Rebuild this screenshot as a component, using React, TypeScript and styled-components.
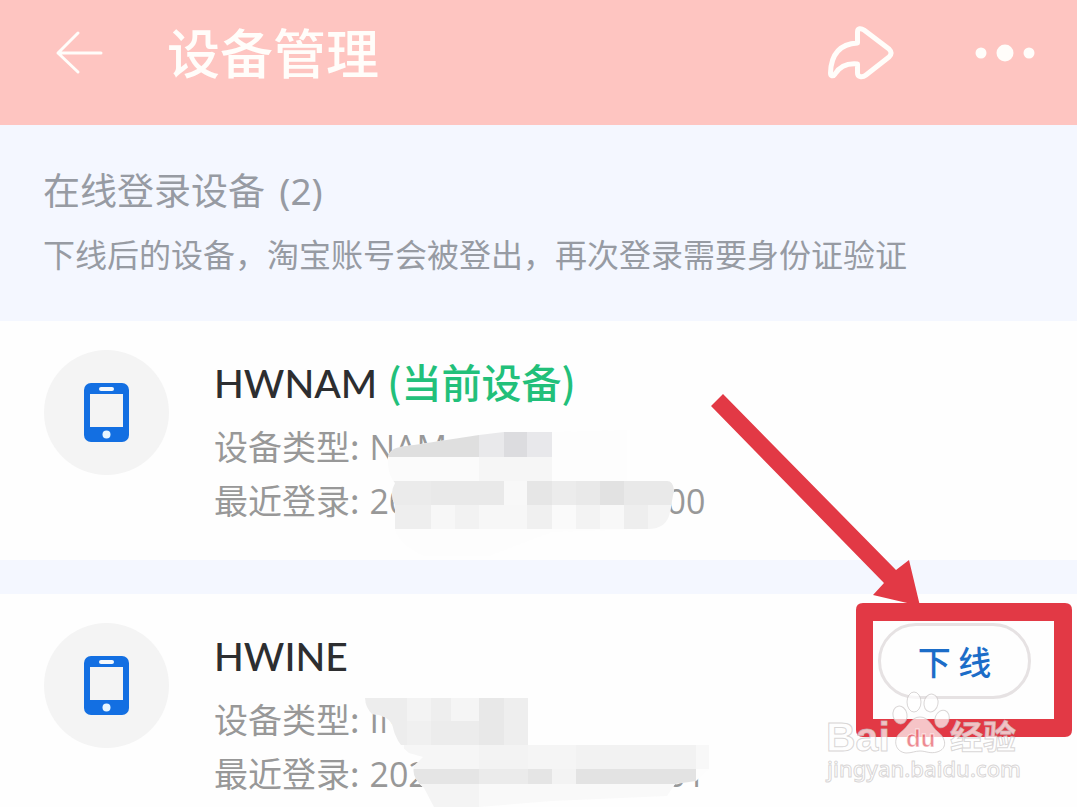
import React from "react";
import styled, { createGlobalStyle } from "styled-components";

const GlobalStyle = createGlobalStyle`
  *, *::before, *::after { box-sizing: border-box; }
  body {
    margin: 0;
    background: #f4f7ff;
    font-family: "Noto Sans CJK SC", "Noto Sans", sans-serif;
  }
  h1, h2, h3, p, ul { margin: 0; padding: 0; }
`;

const Page = styled.div`
  position: relative;
  min-height: 100vh;
  overflow: hidden;
  background: #f4f7ff;
`;

const Header = styled.header`
  display: flex;
  align-items: center;
  height: 125px;
  padding: 0 41px 20px 52px;
  background: #fec5c1;
  color: #fffdfa;
`;

const IconButton = styled.button`
  display: flex;
  align-items: center;
  justify-content: center;
  padding: 0;
  border: 0;
  background: none;
  color: inherit;
`;

const Title = styled.h1`
  flex: 1;
  margin-left: 61px;
  padding-bottom: 4px;
  font-size: 53px;
  line-height: 72px;
  font-weight: 500;
`;

const HeaderActions = styled.div`
  display: flex;
  align-items: center;
  gap: 78px;
`;

const Intro = styled.section`
  height: 196px;
  padding: 36px 43px 0;
  color: #979ba3;
`;

const IntroTitle = styled.h2`
  font-size: 37px;
  line-height: 56px;
  font-weight: 400;
`;

const Count = styled.span`
  margin-left: 6px;
  font-family: "Noto Sans", sans-serif;
`;

const IntroText = styled.p`
  margin-top: 10px;
  font-size: 32px;
  line-height: 48px;
  white-space: nowrap;
`;

const DeviceList = styled.ul`
  display: flex;
  flex-direction: column;
  gap: 34px;
  list-style: none;
`;

const Device = styled.li<{ $last?: boolean }>`
  display: flex;
  align-items: flex-start;
  padding: 29px 46px ${(p) => (p.$last ? 7 : 33)}px 44px;
  background: #fefefe;
`;

const Avatar = styled.div`
  display: flex;
  flex: none;
  align-items: center;
  justify-content: center;
  width: 125px;
  height: 125px;
  border-radius: 50%;
  background: #f4f4f4;
`;

const Info = styled.div`
  position: relative;
  flex: 1;
  margin-left: 45px;
`;

const Name = styled.h3`
  height: 62px;
  margin-bottom: 7px;
  font-size: 40px;
  line-height: 62px;
  font-weight: 500;
  color: #2d2e30;
`;

const Latin = styled.span`
  font-family: Lato, "Noto Sans", sans-serif;
  font-size: 39px;
`;

const Current = styled.span`
  margin-left: 10px;
  color: #22c07a;
`;

const Meta = styled.p`
  display: flex;
  align-items: baseline;
  gap: 10px;
  height: 54px;
  font-size: 34px;
  line-height: 54px;
  color: #989898;
  white-space: nowrap;
`;

const Value = styled.span`
  display: flex;
  justify-content: space-between;
  width: 336px;
  font-family: "Open Sans", sans-serif;
`;

const Mosaic = styled.svg`
  position: absolute;
  top: 75px;
  left: 150px;
`;

const ActionArea = styled.div`
  position: relative;
  flex: none;
`;

const OfflineButton = styled.button`
  width: 153px;
  height: 76px;
  padding: 0;
  border: 3px solid #e6e2e3;
  border-radius: 38px;
  background: #fefefe;
  font-family: inherit;
  font-size: 33px;
  font-weight: 500;
  color: #1c6dc8;
`;

const Pointer = styled.svg`
  position: absolute;
  right: -46px;
  top: -235px;
  pointer-events: none;
`;

const Watermark = styled.svg`
  position: absolute;
  right: 47px;
  bottom: 17px;
  pointer-events: none;
`;

function PhoneIcon() {
  return (
    <svg width="45" height="60" viewBox="0 1 45 60" aria-hidden="true">
      <rect x="0" y="1" width="45" height="59" rx="7" fill="#136fe2" />
      <rect x="15" y="5" width="15" height="4" rx="2" fill="#f4f8fc" />
      <rect x="6" y="12" width="33" height="33" fill="#f4f4f4" />
      <circle cx="22.5" cy="52.5" r="4" fill="#e8f6ff" />
    </svg>
  );
}

type Cell = [number, number, number, number, string];

const firstCells: Cell[] = [
  [388, 432, 92, 25, "#dfdfdf"],
  [480, 432, 25, 25, "#e9e9eb"],
  [505, 432, 23, 25, "#dcdcdf"],
  [528, 432, 25, 25, "#e8e8eb"],
  [388, 457, 92, 24, "#fbfbfb"],
  [480, 457, 73, 24, "#f6f6f6"],
  [388, 481, 44, 24, "#ebebeb"],
  [432, 481, 73, 24, "#e9e9e9"],
  [505, 481, 23, 24, "#f8f8f8"],
  [528, 481, 25, 24, "#e6e6e6"],
  [553, 481, 24, 24, "#ececec"],
  [577, 481, 24, 24, "#e9e9e9"],
  [601, 481, 24, 24, "#e2e2e2"],
  [625, 481, 60, 24, "#e9e9e9"],
  [388, 505, 44, 24, "#eeeeee"],
  [432, 505, 24, 24, "#f7f7f7"],
  [456, 505, 24, 24, "#f2f2f2"],
  [480, 505, 48, 24, "#f7f7f7"],
  [528, 505, 25, 24, "#f0f0f0"],
  [553, 505, 24, 24, "#fafafa"],
  [577, 505, 24, 24, "#f3f3f3"],
  [601, 505, 24, 24, "#f8f8f8"],
  [625, 505, 24, 24, "#eeeeee"],
  [649, 505, 36, 24, "#f4f4f4"],
];

const secondCells: Cell[] = [
  [366, 697, 42, 48, "#ededed"],
  [408, 697, 24, 24, "#f3f3f3"],
  [432, 697, 20, 24, "#eeeeee"],
  [452, 697, 28, 24, "#f5f5f5"],
  [408, 721, 24, 24, "#f0f0f0"],
  [432, 721, 48, 24, "#ececec"],
  [480, 697, 25, 48, "#e8e8e8"],
  [505, 697, 24, 48, "#eeeeee"],
  [405, 745, 75, 24, "#f6f6f6"],
  [480, 745, 49, 24, "#f3f3f3"],
  [529, 745, 48, 24, "#f5f5f5"],
  [577, 745, 120, 24, "#f2f2f2"],
  [697, 745, 20, 24, "#f8f8f8"],
  [405, 769, 75, 15, "#e5e5e5"],
  [480, 769, 49, 15, "#ebebeb"],
  [529, 769, 24, 15, "#e5e5e5"],
  [553, 769, 24, 15, "#f3f3f3"],
  [577, 769, 120, 15, "#e3e3e3"],
  [405, 784, 75, 24, "#f4f4f4"],
  [480, 784, 200, 24, "#f9f9f9"],
];

function Redaction({ id, top, shape, cells }: { id: string; top: number; shape: string; cells: Cell[] }) {
  return (
    <Mosaic width="360" height="140" viewBox={`365 ${top} 360 140`} aria-hidden="true">
      <clipPath id={id}>
        <path d={shape} />
      </clipPath>
      <g clipPath={`url(#${id})`} shapeRendering="crispEdges">
        <rect x="365" y={top} width="360" height="140" fill="#fdfdfd" />
        {cells.map(([x, y, w, h, fill], i) => (
          <rect key={i} x={x} y={y} width={w} height={h} fill={fill} />
        ))}
      </g>
    </Mosaic>
  );
}

export default function App() {
  return (
    <Page>
      <GlobalStyle />
      <Header>
        <IconButton type="button" aria-label="返回">
          <svg width="54" height="48" viewBox="52 29 54 48" fill="none" stroke="currentColor" strokeWidth="3" strokeLinecap="round" strokeLinejoin="round">
            <path d="M101 53H58M78 33L58 53L78 72" />
          </svg>
        </IconButton>
        <Title>设备管理</Title>
        <HeaderActions>
          <IconButton type="button" aria-label="分享">
            <svg width="70" height="58" viewBox="826 24 70 58" fill="none" stroke="currentColor" strokeWidth="5" strokeLinejoin="round">
              <path d="M857.500 43V32C857.500 28 861 28 864 30L889 49Q893 53 889 57L866 75C862 78 857.500 77 857.500 73V64C847 63 840 66 835 74C833 77 830.500 76 830.500 73C831 55 839 44 857.500 43Z" />
            </svg>
          </IconButton>
          <IconButton type="button" aria-label="更多">
            <svg width="62" height="20" viewBox="974 43 62 20" fill="currentColor">
              <circle cx="981" cy="53" r="5.500" />
              <circle cx="1005" cy="53" r="8.500" />
              <circle cx="1029" cy="53" r="5.500" />
            </svg>
          </IconButton>
        </HeaderActions>
      </Header>

      <Intro>
        <IntroTitle>在线登录设备 <Count>(2)</Count></IntroTitle>
        <IntroText>下线后的设备，淘宝账号会被登出，再次登录需要身份证验证</IntroText>
      </Intro>

      <DeviceList>
        <Device>
          <Avatar><PhoneIcon /></Avatar>
          <Info>
            <Name><Latin>HWNAM</Latin><Current>(当前设备)</Current></Name>
            <Meta><span>设备类型:</span><Value>NAM-</Value></Meta>
            <Meta><span>最近登录:</span><Value><span>20</span><span>00</span></Value></Meta>
            <Redaction
              id="mosaic-first"
              top={425}
              cells={firstCells}
              shape="M389 457C392 447 400 447 415 445L480 435L505 432H553L628 430V481H668Q674 481 675 490L671 512Q668 529 649 529L553 532L490 556H425Q400 545 396 529V505Q390 494 396 483Q388 474 389 457Z"
            />
          </Info>
        </Device>
        <Device $last>
          <Avatar><PhoneIcon /></Avatar>
          <Info>
            <Name><Latin>HWINE</Latin></Name>
            <Meta><span>设备类型:</span><Value>IN</Value></Meta>
            <Meta><span>最近登录:</span><Value><span>202</span><span>01</span></Value></Meta>
            <Redaction
              id="mosaic-second"
              top={698}
              cells={secondCells}
              shape="M366 697H529V745H710V769L697 781L676 784L668 796L553 801L480 807H435L425 788Q412 777 415 766L424 757L410 753Q397 744 393 724Q388 715 373 714Q366 707 366 697Z"
            />
          </Info>
          <ActionArea>
            <OfflineButton type="button">下 线</OfflineButton>
            <Pointer width="371" height="355" viewBox="706 388 371 355" aria-hidden="true">
              <path d="M711 406L723 394L896 570L909 560L920 606L873 595L884 583Z" fill="#e23945" />
              <path fillRule="evenodd" d="M863 603H1065Q1072 603 1072 610V730Q1072 737 1065 737H863Q856 737 856 730V610Q856 603 863 603ZM873 621V719H1054V621Z" fill="#e23945" />
            </Pointer>
          </ActionArea>
        </Device>
      </DeviceList>

      <Watermark width="206" height="100" viewBox="824 690 206 100" role="img" aria-label="Baidu 经验">
        <g fill="#ffffff" fillOpacity="0.7" stroke="#c4c0c0" strokeOpacity="0.65" strokeWidth="1">
          <ellipse cx="900" cy="715" rx="7" ry="9" transform="rotate(-12 900 715)" />
          <ellipse cx="914" cy="702" rx="7" ry="10" />
          <ellipse cx="931" cy="703" rx="7" ry="9" transform="rotate(10 931 703)" />
          <ellipse cx="942" cy="719" rx="7" ry="9" transform="rotate(20 942 719)" />
          <path d="M920 717C911 717 909 726 901 732C892 739 895 752 906 753C912 753 915 751 920 751C926 751 930 754 937 752C948 749 946 738 938 732C931 726 929 717 920 717Z" />
          <g fontFamily="Liberation Sans, sans-serif" fontWeight="700">
            <text x="826" y="751" fontSize="41">Bai</text>
            <text x="906" y="747" fontSize="24" fill="#e23945" fillOpacity="0.6" stroke="#fff">du</text>
          </g>
          <text x="950" y="749" fontSize="33" fontWeight="700" fontFamily="Noto Sans CJK SC, sans-serif">经验</text>
          <text x="827" y="777" fontSize="22" fontWeight="500" fontFamily="Noto Sans, sans-serif">jingyan.baidu.com</text>
        </g>
      </Watermark>
    </Page>
  );
}
